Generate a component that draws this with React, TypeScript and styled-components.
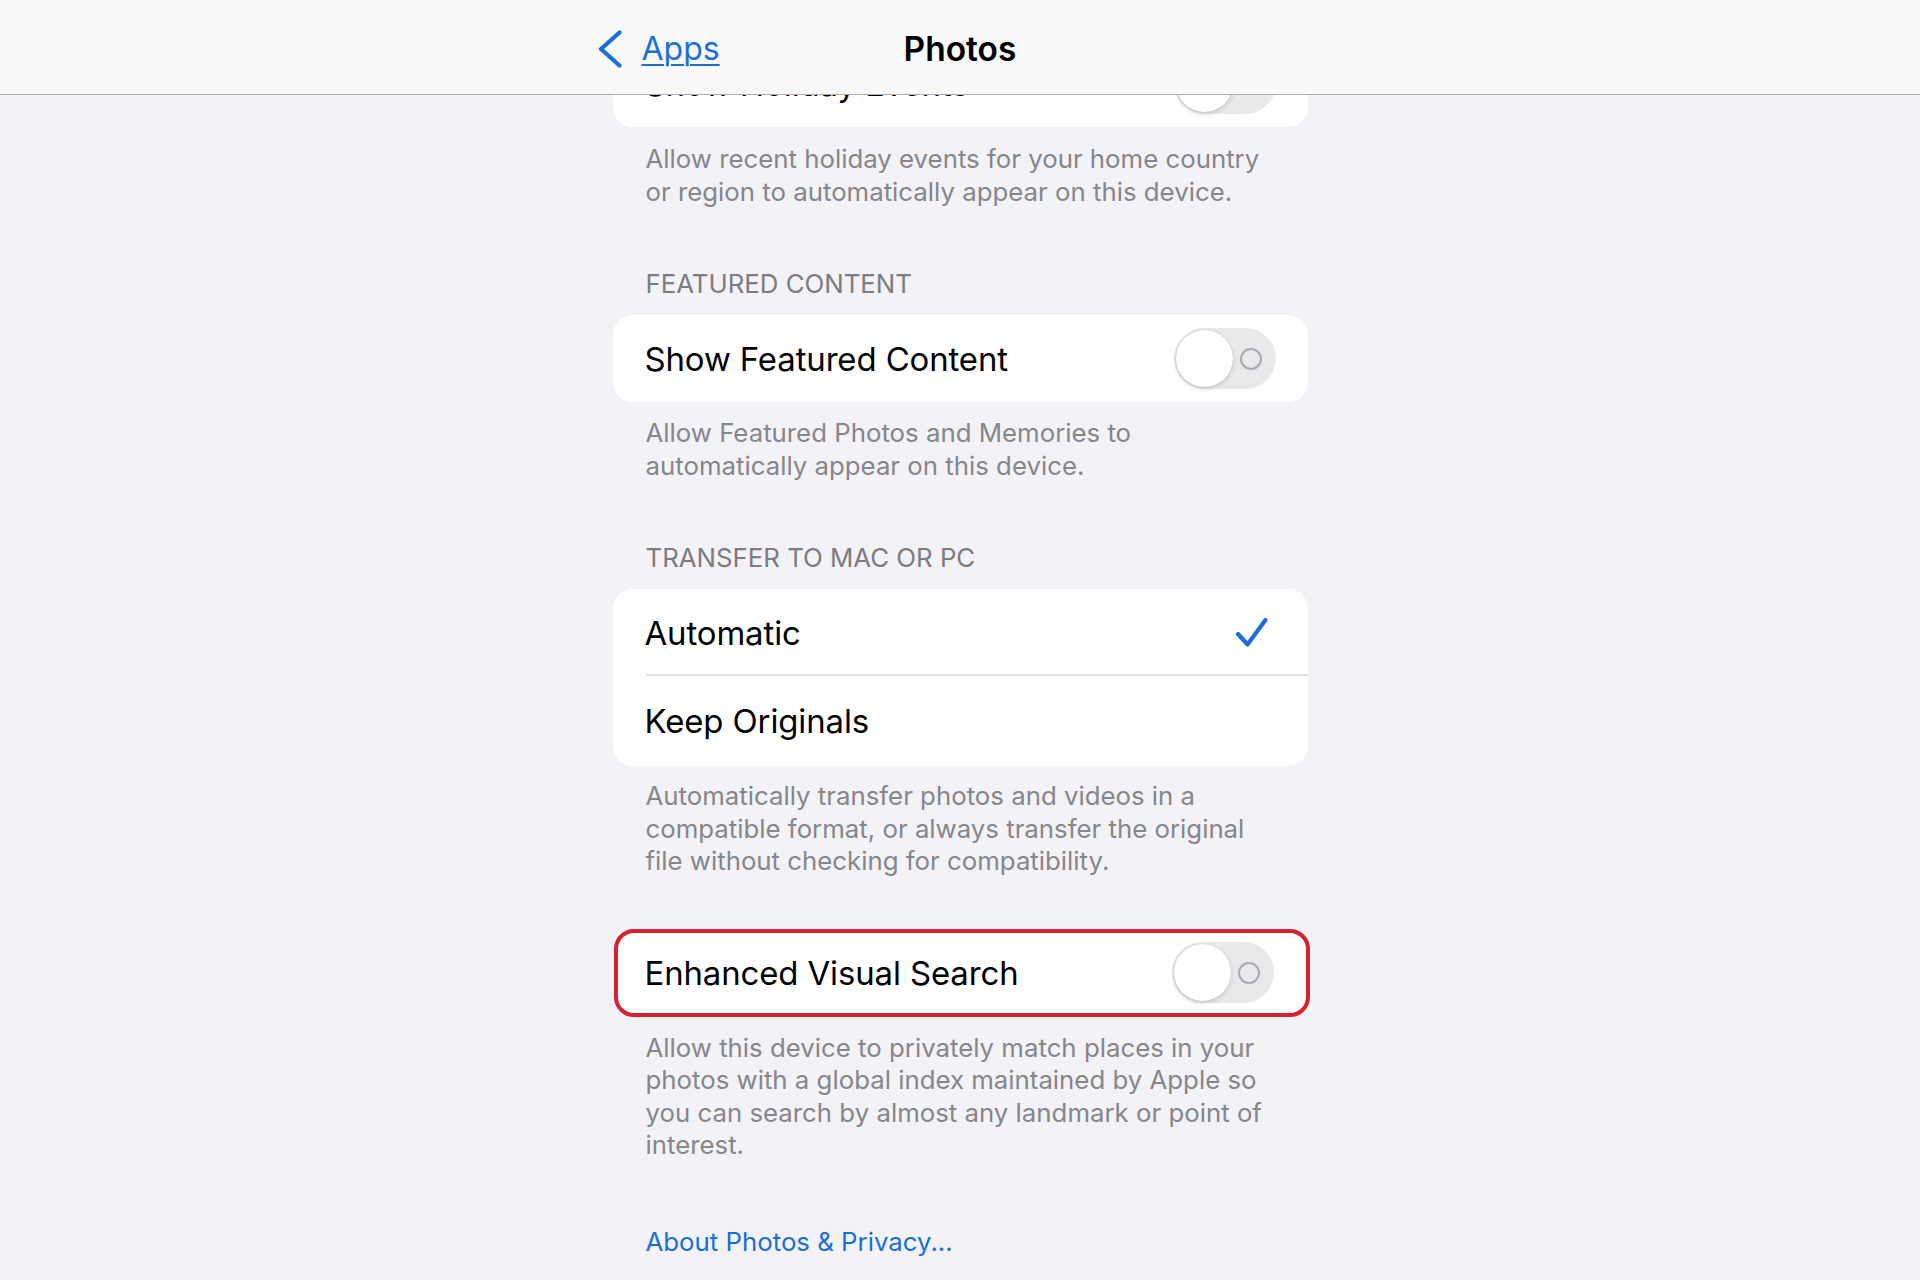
import React from "react";
import styled, { createGlobalStyle } from "styled-components";

const GlobalStyle = createGlobalStyle`
  html, body {
    margin: 0;
    padding: 0;
    background: #f2f2f7;
  }
  body {
    font-family: Inter, "Noto Sans", "Liberation Sans", sans-serif;
    -webkit-font-smoothing: antialiased;
  }
`;

const Page = styled.div`
  position: relative;
  width: 1920px;
  height: 1280px;
  overflow: hidden;
  background: #f2f2f7;
`;

const NavBar = styled.header`
  position: absolute;
  top: 0;
  left: 0;
  right: 0;
  height: 95px;
  box-sizing: border-box;
  padding-top: 3px;
  z-index: 2;
  background: linear-gradient(180deg, #f8f9fa 0%, #f9f9f9 100%);
  border-bottom: 1.5px solid #aeaeb2;
  display: flex;
  align-items: center;
`;

const NavInner = styled.div`
  width: 723px;
  margin: 0 auto;
  display: grid;
  grid-template-columns: 1fr auto 1fr;
  align-items: center;
`;

const BackButton = styled.a`
  display: flex;
  align-items: center;
  gap: 19px;
  margin-left: -2px;
  color: #1a6fdb;
  font-size: 32px;
  text-decoration: underline;
  text-decoration-thickness: 2px;
  text-underline-offset: 4px;
  cursor: pointer;
  justify-self: start;
`;

const Title = styled.h1`
  margin: 0;
  font-size: 33.5px;
  font-weight: 600;
  color: #000;
  letter-spacing: 0;
`;

const Column = styled.main`
  width: 695px;
  margin: 0 auto;
  padding-top: 40px;
  display: flex;
  flex-direction: column;
`;

const SectionHeader = styled.div`
  margin: 60px 0 15px;
  padding-left: 33px;
  font-size: 25.8px;
  line-height: 32px;
  color: #7c7c81;
  text-transform: uppercase;
`;

const Card = styled.div<{ $highlight?: boolean; $gap?: number }>`
  background: #fff;
  border-radius: 20px;
  overflow: hidden;
  margin-top: ${(p) => (p.$gap ? `${p.$gap}px` : "0")};
  ${(p) =>
    p.$highlight
      ? `border: 4px solid #d8202e; margin-left: 1px; margin-right: -2px;`
      : ""}
`;

const Row = styled.div<{ $divider?: boolean; $inset?: number; $h?: number }>`
  position: relative;
  height: ${(p) => p.$h ?? 87}px;
  padding: 0 32px 0 ${(p) => p.$inset ?? 32}px;
  display: flex;
  align-items: center;
  justify-content: space-between;
  ${(p) =>
    p.$divider
      ? `&::after {
          content: "";
          position: absolute;
          left: 33px;
          right: 0;
          bottom: 0;
          height: 2px;
          background: #e0e0e3;
        }`
      : ""}
`;

const Label = styled.span`
  font-size: 32.9px;
  color: #000;
  letter-spacing: -0.1px;
`;

const Footer = styled.p<{ $top?: number }>`
  margin: ${(p) => p.$top ?? 15}px 0 0;
  padding-left: 33px;
  font-size: 25.8px;
  line-height: 32.5px;
  color: #86868b;
  white-space: nowrap;
`;

const Link = styled.a`
  margin-top: 64px;
  padding-left: 33px;
  font-size: 25.8px;
  line-height: 32px;
  color: #1a6fdb;
  cursor: pointer;
`;

const Track = styled.div`
  position: relative;
  width: 102px;
  height: 61px;
  border-radius: 31px;
  background: #e9e9eb;
  flex-shrink: 0;
`;

const Knob = styled.div`
  position: absolute;
  top: 2px;
  left: 2px;
  width: 57px;
  height: 57px;
  border-radius: 50%;
  background: #fff;
  box-shadow: 0 2px 5px rgba(0, 0, 0, 0.14), 0 0 1px rgba(0, 0, 0, 0.18);
`;

const OffMark = styled.div`
  position: absolute;
  top: 50%;
  left: 77px;
  width: 18px;
  height: 18px;
  margin: -11px 0 0 -11px;
  border-radius: 50%;
  border: 2px solid #a9a9ae;
`;

const CheckWrap = styled.span`
  display: flex;
  margin-right: 7px;
`;

const Toggle = () => (
  <Track>
    <OffMark />
    <Knob />
  </Track>
);

const Check = () => (
  <CheckWrap>
    <svg width="34" height="32" viewBox="0 0 34 32" aria-hidden>
      <path
        d="M3 17 L12.5 27.5 L30.5 3"
        fill="none"
        stroke="#1a6fdb"
        strokeWidth="4.2"
        strokeLinecap="round"
        strokeLinejoin="round"
      />
    </svg>
  </CheckWrap>
);

const Chevron = () => (
  <svg width="26" height="38" viewBox="0 0 26 38" aria-hidden>
    <path
      d="M22.5 2.5 L4 19 L22.5 35.5"
      fill="none"
      stroke="#1a6fdb"
      strokeWidth="4.2"
      strokeLinecap="round"
      strokeLinejoin="round"
    />
  </svg>
);

const Lines = ({ lines }: { lines: string[] }) => (
  <>
    {lines.map((l, i) => (
      <React.Fragment key={i}>
        {l}
        {i < lines.length - 1 && <br />}
      </React.Fragment>
    ))}
  </>
);

export default function App() {
  return (
    <Page>
      <GlobalStyle />
      <NavBar>
        <NavInner>
          <BackButton>
            <Chevron />
            Apps
          </BackButton>
          <Title>Photos</Title>
          <span />
        </NavInner>
      </NavBar>
      <Column>
        <Card>
          <Row>
            <Label>Show Holiday Events</Label>
            <Toggle />
          </Row>
        </Card>
        <Footer $top={16}>
          <Lines
            lines={[
              "Allow recent holiday events for your home country",
              "or region to automatically appear on this device.",
            ]}
          />
        </Footer>

        <SectionHeader>Featured Content</SectionHeader>
        <Card>
          <Row>
            <Label>Show Featured Content</Label>
            <Toggle />
          </Row>
        </Card>
        <Footer>
          <Lines
            lines={[
              "Allow Featured Photos and Memories to",
              "automatically appear on this device.",
            ]}
          />
        </Footer>

        <SectionHeader>Transfer to Mac or PC</SectionHeader>
        <Card>
          <Row $divider>
            <Label>Automatic</Label>
            <Check />
          </Row>
          <Row $h={90}>
            <Label>Keep Originals</Label>
          </Row>
        </Card>
        <Footer $top={14}>
          <Lines
            lines={[
              "Automatically transfer photos and videos in a",
              "compatible format, or always transfer the original",
              "file without checking for compatibility.",
            ]}
          />
        </Footer>

        <Card $highlight $gap={51}>
          <Row $h={80} $inset={27}>
            <Label>Enhanced Visual Search</Label>
            <Toggle />
          </Row>
        </Card>
        <Footer $top={15}>
          <Lines
            lines={[
              "Allow this device to privately match places in your",
              "photos with a global index maintained by Apple so",
              "you can search by almost any landmark or point of",
              "interest.",
            ]}
          />
        </Footer>
        <Link>About Photos &amp; Privacy...</Link>
      </Column>
    </Page>
  );
}
